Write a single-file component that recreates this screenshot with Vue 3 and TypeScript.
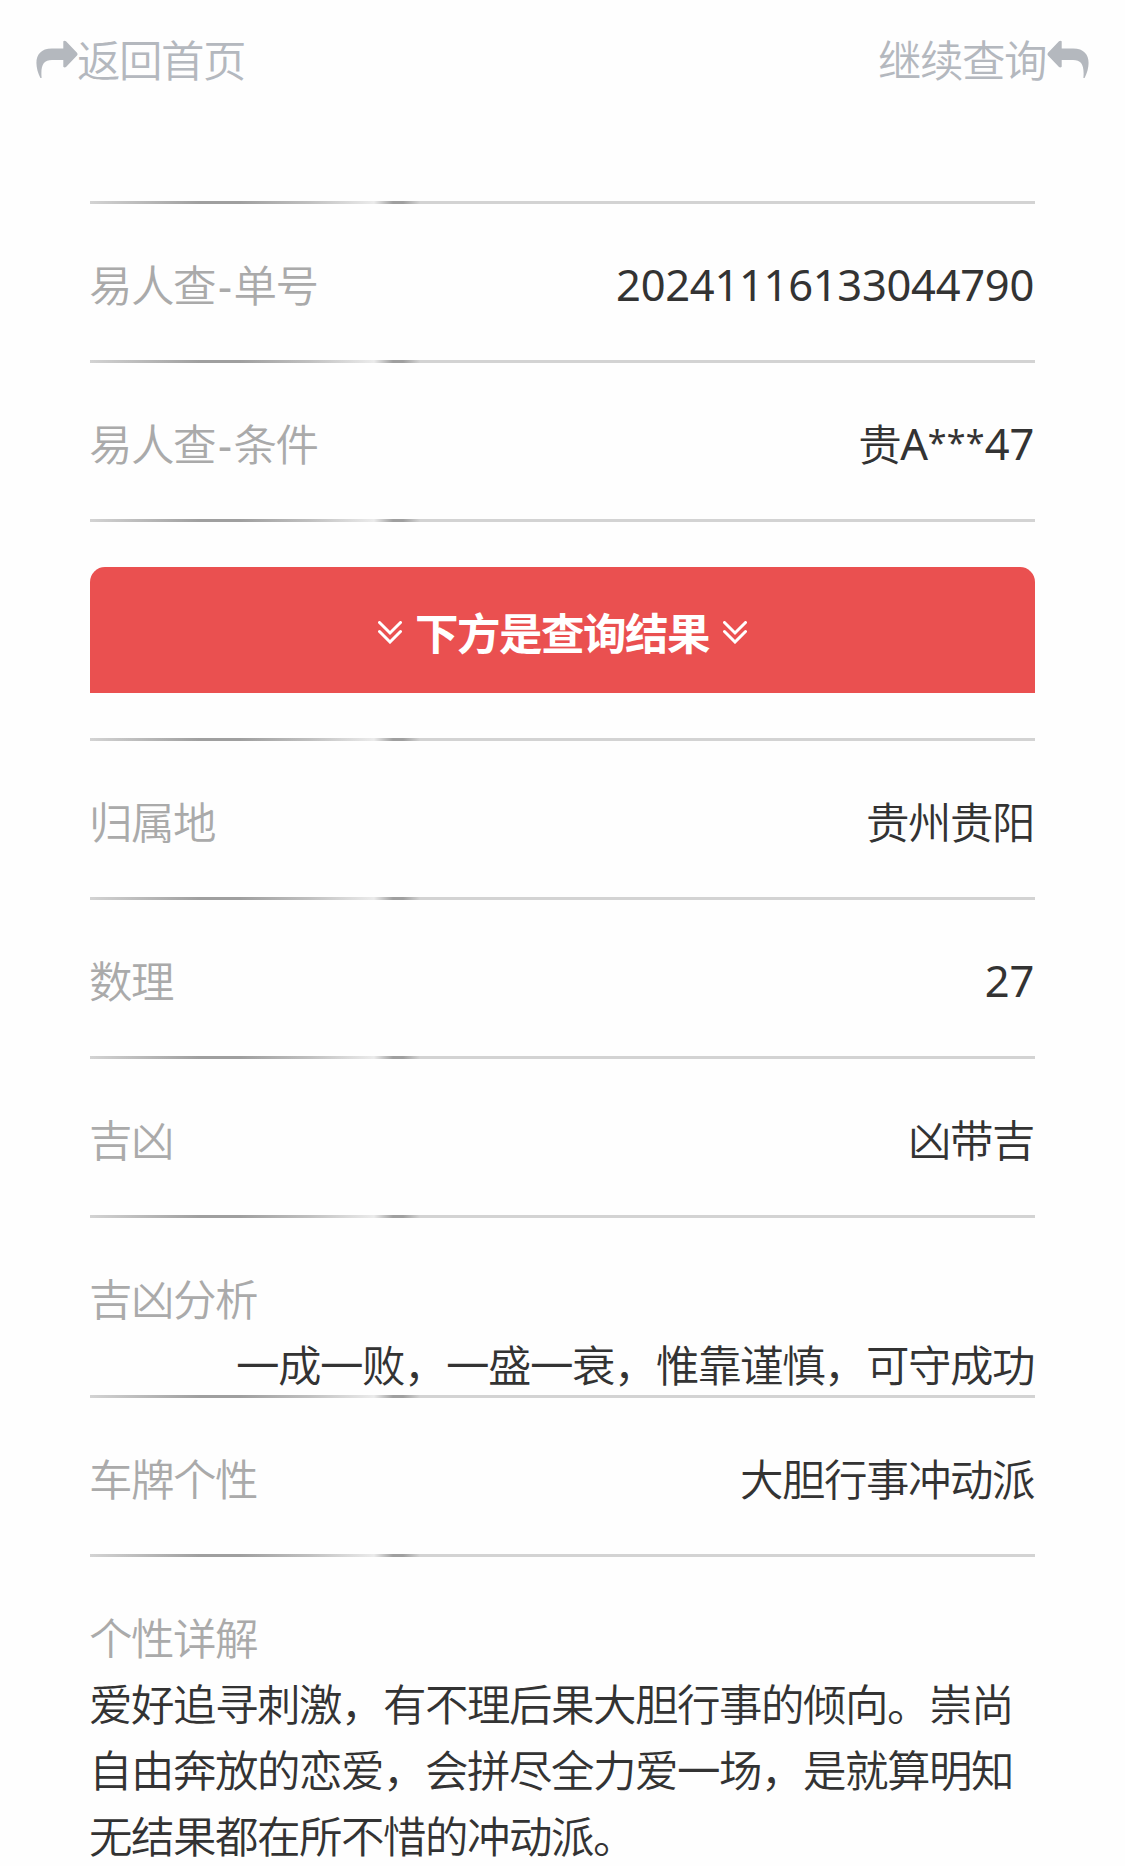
<script setup lang="ts">
interface Row {
  label: string
  value: string
  kind?: 'wrap' | 'detail'
}

interface Part {
  text: string
  cls: string
}

const order: Row[] = [
  { label: '易人查-单号', value: '20241116133044790' },
  { label: '易人查-条件', value: '贵A***47' },
]

const result: Row[] = [
  { label: '归属地', value: '贵州贵阳' },
  { label: '数理', value: '27' },
  { label: '吉凶', value: '凶带吉' },
  { label: '吉凶分析', value: '一成一败，一盛一衰，惟靠谨慎，可守成功', kind: 'wrap' },
  { label: '车牌个性', value: '大胆行事冲动派' },
  {
    label: '个性详解',
    value: '爱好追寻刺激，有不理后果大胆行事的倾向。崇尚自由奔放的恋爱，会拼尽全力爱一场，是就算明知无结果都在所不惜的冲动派。',
    kind: 'detail',
  },
]

// Latin runs use their own weight and tracking beside the Chinese glyphs.
function parts(text: string): Part[] {
  return (text.match(/[0-9A-Z]+|\*+|-|[^0-9A-Z*-]+/g) ?? []).map((t) => ({
    text: t,
    cls: /^[0-9A-Z]/.test(t) ? 'latin' : t[0] === '*' ? 'stars' : t === '-' ? 'dash' : 'han',
  }))
}
</script>

<template>
  <div class="page">
    <header class="nav">
      <a class="link">
        <svg class="arrow" viewBox="0 0 42 38"><path d="M27.3 1.3 Q28.6 0 30 1.3 L41 12.8 Q42 14.2 41 15.5 L30 27 Q28.6 28 27.3 26.8 V20 H16 C7.5 20 4.5 25 5.6 38 H4.4 C-2.5 24 -1.5 8.5 16 8.5 H27.3 Z" /></svg>
        <span class="navtext">返回首页</span>
      </a>
      <a class="link">
        <span class="navtext">继续查询</span>
        <svg class="arrow flip" viewBox="0 0 42 38"><path d="M27.3 1.3 Q28.6 0 30 1.3 L41 12.8 Q42 14.2 41 15.5 L30 27 Q28.6 28 27.3 26.8 V20 H16 C7.5 20 4.5 25 5.6 38 H4.4 C-2.5 24 -1.5 8.5 16 8.5 H27.3 Z" /></svg>
      </a>
    </header>

    <main class="content">
      <section>
        <div v-for="row in order" :key="row.label" class="row">
          <span class="label"><span v-for="(p, i) in parts(row.label)" :key="i" :class="p.cls">{{ p.text }}</span></span>
          <span class="value"><span v-for="(p, i) in parts(row.value)" :key="i" :class="p.cls">{{ p.text }}</span></span>
        </div>
        <div class="rule"></div>
      </section>

      <div class="banner">
        <svg class="chev" viewBox="0 0 24 23"><path d="M1.5 1.5 L12 12 L22.5 1.5 M1.5 10.5 L12 21 L22.5 10.5" /></svg>
        <span>下方是查询结果</span>
        <svg class="chev" viewBox="0 0 24 23"><path d="M1.5 1.5 L12 12 L22.5 1.5 M1.5 10.5 L12 21 L22.5 10.5" /></svg>
      </div>

      <section>
        <div v-for="row in result" :key="row.label" class="row" :class="row.kind">
          <span class="label">{{ row.label }}</span>
          <span class="value"><span v-for="(p, i) in parts(row.value)" :key="i" :class="p.cls">{{ p.text }}</span></span>
        </div>
      </section>
    </main>
  </div>
</template>

<style>
body {
  margin: 0;
  background: #fefefe;
}
</style>

<style scoped>
.page {
  box-sizing: border-box;
  height: 1866px;
  overflow: hidden;
  background: #fefefe;
  color: #333;
  font-family: 'Noto Sans', 'Noto Sans CJK SC', sans-serif;
  font-size: 43.5px;
  letter-spacing: -1.5px;
  line-height: 66px;
  font-weight: 350;
}
.nav {
  display: flex;
  justify-content: space-between;
  padding: 27px 36px 0 36px;
  height: 174px;
  color: #b4b8be;
}
.link {
  display: flex;
  align-items: flex-start;
}
.navtext {
  margin: 0 1px 0 -1px;
}
.arrow {
  width: 42px;
  height: 38px;
  margin-top: 13px;
  fill: currentColor;
}
.flip {
  transform: scaleX(-1);
}
.content {
  padding: 0 90px;
}
.row,
.rule {
  background: linear-gradient(90deg, #d3d3d3 0, #9f9f9f 110px, #9f9f9f 150px, #c0c0c0 220px, #ebebeb 284px, #9f9f9f 303px, #9f9f9f 313px, #d3d3d3 330px) 0 0 / 100% 3px no-repeat;
}
.rule {
  height: 3px;
}
.row {
  display: flex;
  flex-wrap: wrap;
  justify-content: space-between;
  box-sizing: border-box;
  height: 159px;
  padding-top: 51px;
}
.label {
  color: #aaa;
  margin-left: -1px;
}
.value {
  text-align: right;
  padding-right: 1px;
  box-sizing: border-box;
}
.latin {
  font-weight: 400;
  letter-spacing: -0.3px;
  position: relative;
  top: -1px;
}
.stars {
  position: relative;
  top: -6px;
  font-size: 34px;
  font-weight: 400;
  line-height: 1;
  letter-spacing: 0.3px;
}
.dash {
  display: inline-block;
  width: 18.5px;
  font-weight: 400;
  text-align: center;
}
.wrap {
  height: 180px;
}
.wrap .value {
  width: 100%;
}
.detail {
  display: block;
  height: auto;
}
.detail .label,
.detail .value {
  display: block;
  margin-left: -1px;
  padding-right: 0;
  text-align: left;
}
.banner {
  display: flex;
  justify-content: center;
  align-items: center;
  height: 126px;
  margin: 45px 0;
  border-radius: 15px 15px 0 0;
  background: #ea5050;
  color: #fff;
  font-weight: 700;
}
.banner span {
  margin: 5px 14px 0 13px;
}
.chev {
  width: 24px;
  height: 23px;
  margin-top: 4px;
  fill: none;
  stroke: #fff;
  stroke-width: 3;
  stroke-linecap: round;
}
</style>
